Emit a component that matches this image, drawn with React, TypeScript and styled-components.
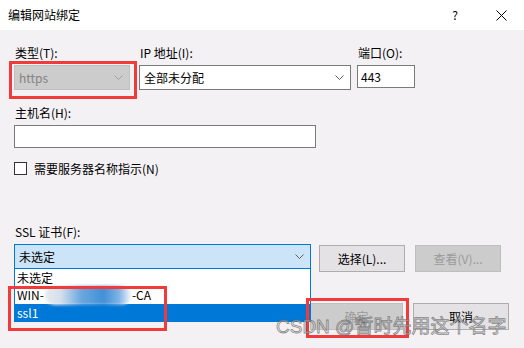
import React from "react";
import styled, { createGlobalStyle, css } from "styled-components";

const Global = createGlobalStyle`
  html, body { margin: 0; padding: 0; background: #f4f1f5; }
  body { font-family: "Noto Sans CJK SC", "Noto Sans", "Liberation Sans", sans-serif; }
  * { box-sizing: border-box; }
`;

const Window = styled.div`
  position: relative;
  width: 524px;
  height: 348px;
  overflow: hidden;
  background: #f4f1f5;
  color: #000;
  font-size: 12px;
  line-height: 16px;
`;

const TitleBar = styled.div`
  height: 30px;
  background: #ffffff;
  display: flex;
  align-items: center;
  padding-left: 8px;
`;

const Title = styled.div`
  flex: 1;
  font-size: 12px;
`;

const CaptionButton = styled.div`
  width: 46px;
  height: 30px;
  display: flex;
  align-items: center;
  justify-content: center;
  font-size: 12px;
  color: #000;
`;

const Body = styled.div`
  padding: 15px 15px 0 14px;
  display: flex;
  flex-direction: column;
`;

const FieldRow = styled.div`
  display: flex;
  align-items: flex-start;
`;

const Field = styled.div<{ $w?: number; $ml?: number; $mt?: number }>`
  display: flex;
  flex-direction: column;
  gap: 4px;
  ${(p) => p.$w !== undefined && css`width: ${p.$w}px;`}
  margin-left: ${(p) => p.$ml ?? 0}px;
  margin-top: ${(p) => p.$mt ?? 0}px;
`;

const Label = styled.div`
  height: 16px;
  padding-left: 1px;
  white-space: nowrap;
`;

const Combo = styled.div<{ $state?: "normal" | "disabled" | "focused" }>`
  position: relative;
  height: 25px;
  display: flex;
  align-items: center;
  justify-content: space-between;
  padding: 0 6px 0 4px;
  border: 1px solid #7a7a7a;
  background: #ffffff;
  white-space: nowrap;
  ${(p) =>
    p.$state === "disabled" &&
    css`
      background: #cccccc;
      border-color: #bfbfbf;
      color: #838383;
    `}
  ${(p) =>
    p.$state === "focused" &&
    css`
      background: #cce4f7;
      border-color: #0078d7;
    `}
`;

const TextBox = styled.div<{ $w: number }>`
  width: ${(p) => p.$w}px;
  height: 23px;
  border: 1px solid #7a7a7a;
  background: #ffffff;
  padding: 0 3px;
  display: flex;
  align-items: center;
`;

const CheckRow = styled.div`
  margin-top: 14px;
  display: flex;
  align-items: center;
  gap: 7px;
  height: 13px;
`;

const CheckBox = styled.div`
  width: 13px;
  height: 13px;
  border: 1px solid #333333;
  background: #ffffff;
`;

const SslRow = styled.div`
  display: flex;
  align-items: flex-start;
`;

const SslComboWrap = styled.div`
  position: relative;
  width: 297px;
`;

const Dropdown = styled.div`
  position: absolute;
  left: 0;
  top: 25px;
  width: 297px;
  background: #ffffff;
  border: 1px solid #0078d7;
  border-top: none;
  border-bottom: none;
  z-index: 2;
`;

const Option = styled.div<{ $selected?: boolean; $h: number }>`
  height: ${(p) => p.$h}px;
  display: flex;
  align-items: center;
  padding-left: 2px;
  white-space: nowrap;
  ${(p) =>
    p.$selected &&
    css`
      background: #0078d7;
      color: #ffffff;
    `}
`;

const Blur = styled.span`
  display: inline-block;
  width: 86px;
  height: 19px;
  margin: 1px 1px 0;
  border-radius: 10px;
  background: linear-gradient(90deg, #e6eaef 0%, #d6e0ec 18%, #6aa7de 42%, #4190d8 68%, #7fb3e4 86%, #f2f6fb 100%);
  filter: blur(1.5px);
`;

const Button = styled.div<{ $w: number; $h: number; $disabled?: boolean; $ml?: number; $mt?: number }>`
  width: ${(p) => p.$w}px;
  height: ${(p) => p.$h}px;
  margin-left: ${(p) => p.$ml ?? 0}px;
  margin-top: ${(p) => p.$mt ?? 0}px;
  border: 1px solid #adadad;
  background: #e5e2e6;
  display: flex;
  align-items: center;
  justify-content: center;
  white-space: nowrap;
  ${(p) =>
    p.$disabled &&
    css`
      background: #cccccc;
      border-color: #bfbfbf;
      color: #9a9a9a;
    `}
`;

const Footer = styled.div`
  margin-top: 31px;
  display: flex;
  justify-content: flex-end;
  gap: 10px;
`;

const RedBox = styled.div<{ $x: number; $y: number; $w: number; $h: number }>`
  position: absolute;
  left: ${(p) => p.$x}px;
  top: ${(p) => p.$y}px;
  width: ${(p) => p.$w}px;
  height: ${(p) => p.$h}px;
  border: 3px solid #f13a3a;
  z-index: 5;
  pointer-events: none;
`;

const Watermark = styled.div`
  position: absolute;
  left: 276px;
  top: 314px;
  font-family: "Liberation Sans", "Noto Sans CJK SC", sans-serif;
  font-size: 19px;
  line-height: 26px;
  color: rgba(235, 235, 235, 0.5);
  -webkit-text-stroke: 0.8px rgba(100, 100, 100, 0.75);
  white-space: nowrap;
  z-index: 6;
  pointer-events: none;
`;

const Chevron = ({ color = "#606060" }: { color?: string }) => (
  <svg width="9" height="5" viewBox="0 0 9 5">
    <path d="M0.5 0.5 L4.5 4.5 L8.5 0.5" fill="none" stroke={color} strokeWidth="1" />
  </svg>
);

const CloseIcon = () => (
  <svg width="11" height="11" viewBox="0 0 11 11">
    <path d="M0.5 0.5 L10.5 10.5 M10.5 0.5 L0.5 10.5" stroke="#000" strokeWidth="1" />
  </svg>
);

export default function App() {
  return (
    <>
      <Global />
      <Window>
        <TitleBar>
          <Title>编辑网站绑定</Title>
          <CaptionButton>?</CaptionButton>
          <CaptionButton>
            <CloseIcon />
          </CaptionButton>
        </TitleBar>
        <Body>
          <FieldRow>
            <Field $w={116}>
              <Label>类型(T):</Label>
              <Combo $state="disabled">
                <span>https</span>
                <Chevron color="#a0a0a0" />
              </Combo>
            </Field>
            <Field $w={212} $ml={9}>
              <Label>IP 地址(I):</Label>
              <Combo>
                <span>全部未分配</span>
                <Chevron />
              </Combo>
            </Field>
            <Field $w={58} $ml={6}>
              <Label>端口(O):</Label>
              <TextBox $w={58}>443</TextBox>
            </Field>
          </FieldRow>
          <Field $mt={15}>
            <Label>主机名(H):</Label>
            <TextBox $w={302} />
          </Field>
          <CheckRow>
            <CheckBox />
            <span>需要服务器名称指示(N)</span>
          </CheckRow>
          <Field $mt={49}>
            <Label>SSL 证书(F):</Label>
            <SslRow>
              <SslComboWrap>
                <Combo $state="focused">
                  <span>未选定</span>
                  <Chevron />
                </Combo>
                <Dropdown>
                  <Option $h={17}>未选定</Option>
                  <Option $h={18}>
                    WIN-<Blur />-CA
                  </Option>
                  <Option $h={18} $selected>
                    ssl1
                  </Option>
                </Dropdown>
              </SslComboWrap>
              <Button $w={86} $h={27} $ml={8} $mt={1}>
                选择(L)...
              </Button>
              <Button $w={86} $h={27} $ml={10} $mt={1} $disabled>
                查看(V)...
              </Button>
            </SslRow>
          </Field>
          <Footer>
            <Button $w={93} $h={27} $disabled>
              确定
            </Button>
            <Button $w={96} $h={27}>
              取消
            </Button>
          </Footer>
        </Body>
        <RedBox $x={9} $y={61} $w={128} $h={38} />
        <RedBox $x={8} $y={286} $w={159} $h={45} />
        <RedBox $x={306} $y={298} $w={103} $h={40} />
        <Watermark>CSDN @暂时先用这个名字</Watermark>
      </Window>
    </>
  );
}
